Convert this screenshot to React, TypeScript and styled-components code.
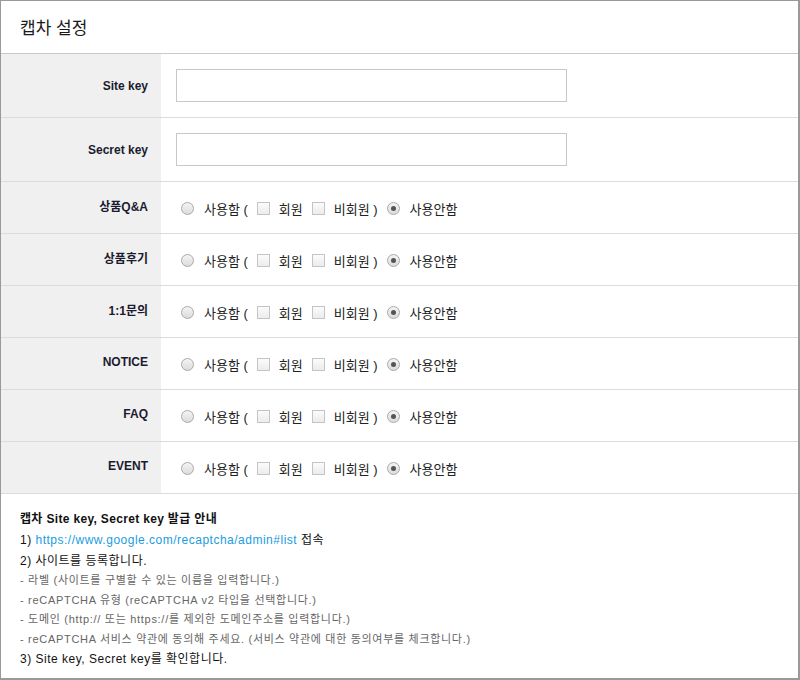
import React from "react";
import styled, { createGlobalStyle } from "styled-components";

const Global = createGlobalStyle`
  html, body { margin: 0; padding: 0; background: #fff; }
  body { font-family: "Liberation Sans", "Noto Sans CJK KR", sans-serif; color: #222; }
  * { box-sizing: border-box; }
`;

const Frame = styled.div`
  width: 800px;
  height: 680px;
  border: 1px solid #999;
  border-right-width: 2px;
  border-bottom-width: 2px;
  background: #fff;
  display: flex;
  flex-direction: column;
`;

const Header = styled.div`
  height: 53px;
  border-bottom: 1px solid #c9c9c9;
  display: flex;
  align-items: center;
  padding-left: 19px;
  font-size: 17px;
  color: #1a1a1a;
  padding-bottom: 2px;
`;

const Row = styled.div<{ $h: number }>`
  display: flex;
  height: ${(p) => p.$h}px;
  border-bottom: 1px solid #dcdcdc;
`;

const Label = styled.div<{ $up?: number }>`
  width: 160px;
  flex: none;
  background: #f0f0f0;
  display: flex;
  align-items: center;
  justify-content: flex-end;
  padding-right: 13px;
  padding-bottom: ${(p) => p.$up ?? 0}px;
  font-size: 12px;
  font-weight: bold;
  color: #1b1b2e;
`;

const Value = styled.div<{ $down?: number }>`
  flex: 1;
  display: flex;
  align-items: center;
  padding-left: 15px;
  padding-top: ${(p) => p.$down ?? 0}px;
  font-size: 13px;
  color: #222;
`;

const TextInput = styled.input`
  width: 391px;
  height: 33px;
  border: 1px solid #c8c8c8;
  outline: none;
  padding: 0 6px;
  margin: 0;
  background: #fff;
`;

const Radio = styled.span<{ $on?: boolean }>`
  width: 13px;
  height: 13px;
  border-radius: 50%;
  border: 1px solid #a9a9a9;
  background: linear-gradient(#f4f4f4, #dcdcdc);
  display: inline-flex;
  align-items: center;
  justify-content: center;
  margin: 0 10px 0 5px;
  flex: none;
  &::after {
    content: "";
    display: ${(p) => (p.$on ? "block" : "none")};
    width: 5px;
    height: 5px;
    border-radius: 50%;
    background: #555;
  }
`;

const Check = styled.span`
  width: 13px;
  height: 13px;
  border: 1px solid #c4c4c4;
  background: linear-gradient(#fbfbfb, #ececec);
  display: inline-block;
  margin: 0 9px 0 0;
  flex: none;
`;

const Opt = styled.span<{ $gap?: number }>`
  margin-right: ${(p) => p.$gap ?? 9}px;
  white-space: pre;
`;

const Guide = styled.div`
  flex: 1;
  padding: 15px 0 0 19px;
  display: flex;
  flex-direction: column;
`;

const Line = styled.div<{ $kind: "title" | "main" | "sub" }>`
  height: ${(p) => (p.$kind === "title" ? 21 : p.$kind === "main" ? 20.5 : 19.5)}px;
  line-height: ${(p) => (p.$kind === "title" ? 21 : p.$kind === "main" ? 20.5 : 19.5)}px;
  font-size: ${(p) => (p.$kind === "sub" ? 11 : 12)}px;
  font-weight: ${(p) => (p.$kind === "title" ? "bold" : "normal")};
  letter-spacing: ${(p) => (p.$kind === "sub" ? 0.7 : p.$kind === "main" ? 0.5 : 0.33)}px;
  color: ${(p) => (p.$kind === "sub" ? "#666" : "#111")};
  white-space: pre;
`;

const Link = styled.a`
  color: #1a9ce0;
  text-decoration: none;
`;

const options = ["상품Q&A", "상품후기", "1:1문의", "NOTICE", "FAQ", "EVENT"];

function OptionRow({ label }: { label: string }) {
  return (
    <Row $h={52}>
      <Label $up={4}>{label}</Label>
      <Value $down={1}>
        <Radio />
        <Opt $gap={9}>사용함 (</Opt>
        <Check />
        <Opt $gap={9}>회원</Opt>
        <Check />
        <Opt $gap={4}>비회원 )</Opt>
        <Radio $on />
        <Opt>사용안함</Opt>
      </Value>
    </Row>
  );
}

export default function App() {
  return (
    <>
      <Global />
      <Frame>
        <Header>캡차 설정</Header>
        <Row $h={64}>
          <Label>Site key</Label>
          <Value>
            <TextInput />
          </Value>
        </Row>
        <Row $h={64}>
          <Label>Secret key</Label>
          <Value>
            <TextInput />
          </Value>
        </Row>
        {options.map((o) => (
          <OptionRow key={o} label={o} />
        ))}
        <Guide>
          <Line $kind="title">캡차 Site key, Secret key 발급 안내</Line>
          <Line $kind="main">
            1) <Link href="#">https://www.google.com/recaptcha/admin#list</Link> 접속
          </Line>
          <Line $kind="main">2) 사이트를 등록합니다.</Line>
          <Line $kind="sub">- 라벨 (사이트를 구별할 수 있는 이름을 입력합니다.)</Line>
          <Line $kind="sub">- reCAPTCHA 유형 (reCAPTCHA v2 타입을 선택합니다.)</Line>
          <Line $kind="sub">- 도메인 (http:// 또는 https://를 제외한 도메인주소를 입력합니다.)</Line>
          <Line $kind="sub">- reCAPTCHA 서비스 약관에 동의해 주세요. (서비스 약관에 대한 동의여부를 체크합니다.)</Line>
          <Line $kind="main">3) Site key, Secret key를 확인합니다.</Line>
        </Guide>
      </Frame>
    </>
  );
}
